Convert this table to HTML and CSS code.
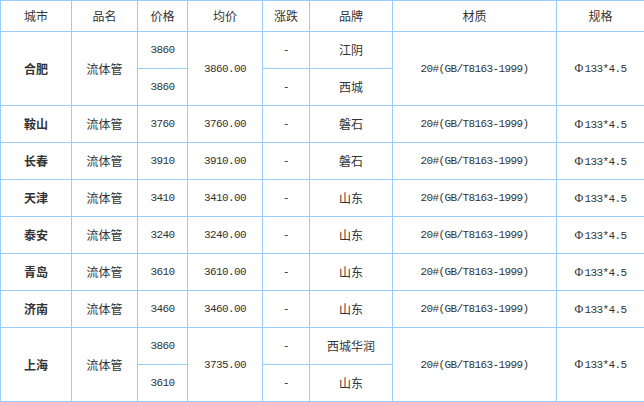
FILE: index.html
```html
<!DOCTYPE html>
<html lang="zh">
<head>
<meta charset="utf-8">
<link rel="stylesheet" href="styles.css">
</head>
<body>
<table class="price">
  <colgroup>
    <col class="c-city"><col class="c-name"><col class="c-price"><col class="c-avg"><col class="c-chg"><col class="c-brand"><col class="c-mat"><col class="c-spec">
  </colgroup>
  <thead>
    <tr class="head"><th>城市</th><th>品名</th><th>价格</th><th>均价</th><th>涨跌</th><th>品牌</th><th>材质</th><th>规格</th></tr>
  </thead>
  <tbody>
    <tr><td rowspan="2" class="city">合肥</td><td rowspan="2">流体管</td><td class="num">3860</td><td rowspan="2" class="num">3860.00</td><td class="num">-</td><td>江阴</td><td rowspan="2" class="num">20#(GB/T8163-1999)</td><td rowspan="2" class="num"><span class="phi">Φ</span>133*4.5</td></tr>
    <tr><td class="num">3860</td><td class="num">-</td><td>西城</td></tr>
    <tr><td class="city">鞍山</td><td>流体管</td><td class="num">3760</td><td class="num">3760.00</td><td class="num">-</td><td>磐石</td><td class="num">20#(GB/T8163-1999)</td><td class="num"><span class="phi">Φ</span>133*4.5</td></tr>
    <tr><td class="city">长春</td><td>流体管</td><td class="num">3910</td><td class="num">3910.00</td><td class="num">-</td><td>磐石</td><td class="num">20#(GB/T8163-1999)</td><td class="num"><span class="phi">Φ</span>133*4.5</td></tr>
    <tr><td class="city">天津</td><td>流体管</td><td class="num">3410</td><td class="num">3410.00</td><td class="num">-</td><td>山东</td><td class="num">20#(GB/T8163-1999)</td><td class="num"><span class="phi">Φ</span>133*4.5</td></tr>
    <tr><td class="city">泰安</td><td>流体管</td><td class="num">3240</td><td class="num">3240.00</td><td class="num">-</td><td>山东</td><td class="num">20#(GB/T8163-1999)</td><td class="num"><span class="phi">Φ</span>133*4.5</td></tr>
    <tr><td class="city">青岛</td><td>流体管</td><td class="num">3610</td><td class="num">3610.00</td><td class="num">-</td><td>山东</td><td class="num">20#(GB/T8163-1999)</td><td class="num"><span class="phi">Φ</span>133*4.5</td></tr>
    <tr><td class="city">济南</td><td>流体管</td><td class="num">3460</td><td class="num">3460.00</td><td class="num">-</td><td>山东</td><td class="num">20#(GB/T8163-1999)</td><td class="num"><span class="phi">Φ</span>133*4.5</td></tr>
    <tr><td rowspan="2" class="city">上海</td><td rowspan="2">流体管</td><td class="num">3860</td><td rowspan="2" class="num">3735.00</td><td class="num">-</td><td>西城华润</td><td rowspan="2" class="num">20#(GB/T8163-1999)</td><td rowspan="2" class="num"><span class="phi">Φ</span>133*4.5</td></tr>
    <tr><td class="num">3610</td><td class="num">-</td><td>山东</td></tr>
  </tbody>
</table>
</body>
</html>
```

FILE: styles.css
```css
html, body {
  margin: 0;
  padding: 0;
  background: #fff;
}
.price {
  border-collapse: collapse;
  table-layout: fixed;
  width: 644px;
  font-family: "Noto Sans CJK SC", "Liberation Sans", sans-serif;
  font-size: 12px;
  color: #333;
}
.price th, .price td {
  border: 1px solid #99ccff;
  padding: 0;
  text-align: center;
  vertical-align: middle;
  font-weight: normal;
  line-height: 16px;
  white-space: nowrap;
}
.price tr { height: 37px; }
.price tr.head { height: 31px; }
.c-city { width: 71px; }
.c-name { width: 66px; }
.c-price { width: 50px; }
.c-avg { width: 75px; }
.c-chg { width: 47px; }
.c-brand { width: 83px; }
.c-mat { width: 164px; }
.c-spec { width: 88px; }
.price td.city { font-weight: bold; }
.price td.num {
  font-family: "Liberation Mono", monospace;
  font-size: 11px;
  letter-spacing: -0.6px;
}
.phi {
  font-family: "Liberation Serif", serif;
  font-size: 12px;
  letter-spacing: 0;
  color: #333;
  margin-right: 1px;
}
```
